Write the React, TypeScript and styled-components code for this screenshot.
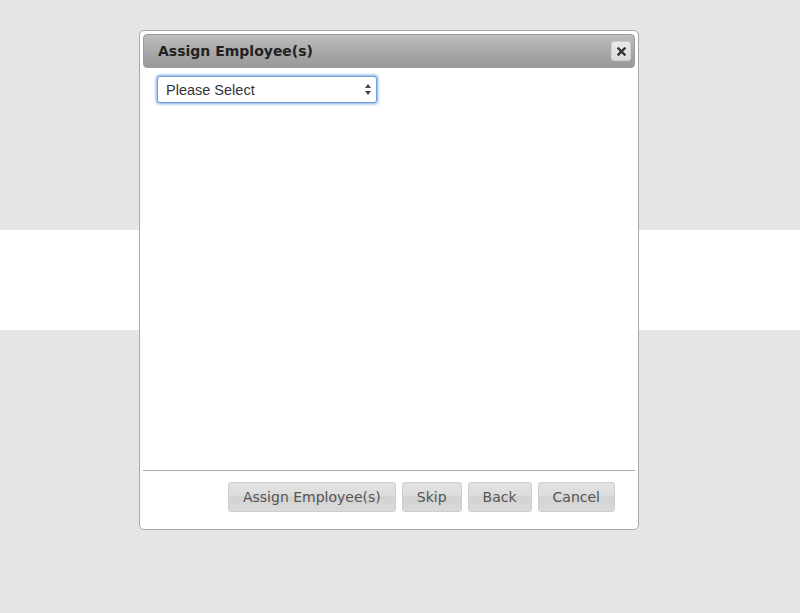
import React from "react";
import styled, { createGlobalStyle } from "styled-components";

const Global = createGlobalStyle`
  html, body { margin: 0; padding: 0; }
  body {
    width: 800px;
    height: 613px;
    overflow: hidden;
    background: linear-gradient(
      to bottom,
      #e5e5e5 0px, #e5e5e5 230px,
      #ffffff 230px, #ffffff 330px,
      #e5e5e5 330px, #e5e5e5 100%
    );
    font-family: "DejaVu Sans", Verdana, sans-serif;
  }
`;

const Page = styled.div`
  padding: 30px 0 0 139px;
`;

const Dialog = styled.div`
  box-sizing: border-box;
  width: 500px;
  height: 500px;
  background: #fff;
  border: 1px solid #a9a9a9;
  border-radius: 5px;
  padding: 3px;
  display: flex;
  flex-direction: column;
`;

const TitleBar = styled.div`
  box-sizing: border-box;
  height: 34px;
  border: 1px solid #9c9c9c;
  border-radius: 4px;
  background: linear-gradient(to bottom, #bdbdbd 0%, #a8a8a8 55%, #999 100%);
  display: flex;
  align-items: center;
  justify-content: space-between;
  padding: 0 3px 0 14px;
`;

const Title = styled.span`
  font-family: "DejaVu Sans", Verdana, sans-serif;
  font-weight: bold;
  font-size: 14px;
  color: #222;
`;

const CloseButton = styled.button`
  width: 20px;
  height: 20px;
  padding: 0;
  border: 1px solid #d0d0d0;
  border-radius: 3px;
  background: linear-gradient(to bottom, #e9e9e9, #dcdcdc);
  display: flex;
  align-items: center;
  justify-content: center;
  cursor: pointer;
`;

const Content = styled.div`
  flex: 1;
  padding: 8px 14px;
`;

const SelectWrap = styled.div`
  position: relative;
  width: 220px;
`;

const Select = styled.select`
  appearance: none;
  -webkit-appearance: none;
  box-sizing: border-box;
  width: 100%;
  height: 27px;
  border: 1px solid #6f9fd8;
  border-radius: 3px;
  box-shadow: 0 0 3px 1px rgba(100, 155, 225, 0.85);
  background: #fff;
  padding: 0 20px 0 8px;
  font-family: "Liberation Sans", Arial, sans-serif;
  font-size: 14.5px;
  color: #333;
  outline: none;
`;

const Arrows = styled.svg`
  position: absolute;
  right: 6px;
  top: 8px;
  pointer-events: none;
`;

const Footer = styled.div`
  border-top: 1px solid #aaa;
  display: flex;
  justify-content: flex-end;
  gap: 6px;
  padding: 11px 20px 14px 0;
`;

const Button = styled.button`
  box-sizing: border-box;
  height: 30px;
  padding: 0 14px;
  border: 1px solid #cdcdcd;
  border-radius: 3px;
  background: linear-gradient(
    to bottom,
    #e3e3e3 0%,
    #dcdcdc 45%,
    #d2d2d2 50%,
    #d6d6d6 75%,
    #dadada 100%
  );
  font-family: "DejaVu Sans", Verdana, sans-serif;
  font-size: 14px;
  color: #555;
  cursor: pointer;
`;

export default function App() {
  return (
    <>
      <Global />
      <Page>
        <Dialog>
          <TitleBar>
            <Title>Assign Employee(s)</Title>
            <CloseButton aria-label="Close">
              <svg width="9" height="9" viewBox="0 0 9 9">
                <path d="M1.5 1.5 L7.5 7.5 M7.5 1.5 L1.5 7.5" stroke="#333" strokeWidth="2.4" strokeLinecap="square" />
              </svg>
            </CloseButton>
          </TitleBar>
          <Content>
            <SelectWrap>
              <Select defaultValue="">
                <option value="">Please Select</option>
              </Select>
              <Arrows width="6" height="11" viewBox="0 0 6 11">
                <path d="M3 0 L6 4 L0 4 Z" fill="#444" />
                <path d="M3 11 L6 7 L0 7 Z" fill="#444" />
              </Arrows>
            </SelectWrap>
          </Content>
          <Footer>
            <Button>Assign Employee(s)</Button>
            <Button>Skip</Button>
            <Button>Back</Button>
            <Button>Cancel</Button>
          </Footer>
        </Dialog>
      </Page>
    </>
  );
}
